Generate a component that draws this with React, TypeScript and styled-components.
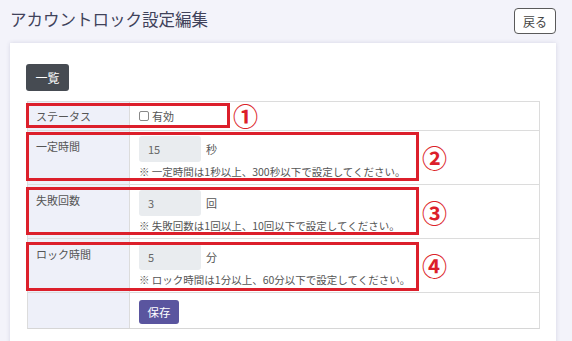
import React from "react";
import styled, { createGlobalStyle } from "styled-components";

const Global = createGlobalStyle`
  html, body { margin: 0; padding: 0; background: #f3f3fa; }
  body { font-family: "Noto Sans CJK JP", "Noto Sans", sans-serif; color: #555; }
  * { box-sizing: border-box; }
`;

const Page = styled.div`
  padding: 8px 16px 0 10px;
  width: 572px;
  height: 341px;
  overflow: hidden;
`;

const Header = styled.div`
  display: flex;
  justify-content: space-between;
  align-items: flex-start;
  height: 35px;
`;

const Title = styled.h1`
  margin: 0;
  margin-top: 0px;
  font-size: 16.5px;
  font-weight: 400;
  line-height: 22px;
  color: #40425a;
`;

const BackButton = styled.button`
  font-family: inherit;
  font-size: 12px;
  color: #444;
  background: #fff;
  border: 1px solid #5a5a5a;
  border-radius: 4px;
  height: 26px;
  width: 42px;
  padding: 0;
  cursor: pointer;
`;

const Card = styled.div`
  position: relative;
  background: #fff;
  box-shadow: 0 0 4px rgba(80, 80, 120, 0.18);
  padding: 21px 16px 20px 17px;
  height: 320px;
`;

const DarkButton = styled.button`
  font-family: inherit;
  font-size: 12px;
  color: #fff;
  background: #464b52;
  border: none;
  border-radius: 3px;
  height: 27px;
  width: 43px;
  padding: 0;
  margin-left: -1px;
`;

const Table = styled.div`
  margin-top: 10px;
  border: 1px solid #dcdcdc;
  border-bottom: 1px solid #d6d6d6;
  display: grid;
  grid-template-columns: 102px 1fr;
`;

const Label = styled.div<{ $center?: boolean }>`
  background: #eef0f9;
  border-right: 1px solid #dcdcdc;
  border-top: 1px solid #dcdcdc;
  font-size: 11px;
  color: #555;
  padding: ${(p) => (p.$center ? "0 8px" : "7px 8px 0")};
  display: flex;
  align-items: ${(p) => (p.$center ? "center" : "flex-start")};
  &:first-child { border-top: none; }
`;

const Value = styled.div<{ $h: number }>`
  border-top: 1px solid #dcdcdc;
  height: ${(p) => p.$h}px;
  padding: 5px 9px 0;
  &:nth-child(2) { border-top: none; padding-top: 0; display: flex; align-items: center; }
`;

const InputRow = styled.div`
  display: flex;
  align-items: center;
  gap: 5px;
`;

const NumInput = styled.div`
  width: 62px;
  height: 26px;
  background: #e9ecef;
  border-radius: 3px;
  font-size: 11px;
  color: #666;
  padding-left: 9px;
  display: flex;
  align-items: center;
`;

const Unit = styled.span`
  font-size: 11px;
  color: #555;
`;

const Hint = styled.div`
  margin-top: 2px;
  font-size: 10.5px;
  color: #555;
  line-height: 15px;
`;

const CheckLabel = styled.label`
  display: flex;
  align-items: center;
  gap: 3px;
  font-size: 11px;
  color: #555;
`;

const Box = styled.span`
  width: 10px;
  height: 10px;
  border: 1px solid #888;
  border-radius: 2px;
  background: #fff;
`;

const SaveButton = styled.button`
  font-family: inherit;
  font-size: 11.5px;
  color: #fff;
  background: #5a559f;
  border: none;
  border-radius: 3px;
  height: 24px;
  width: 40px;
  padding: 0;
  margin-top: 1px;
`;

const Mark = styled.div<{ $l: number; $t: number; $w: number; $h: number }>`
  position: absolute;
  left: ${(p) => p.$l}px;
  top: ${(p) => p.$t}px;
  width: ${(p) => p.$w}px;
  height: ${(p) => p.$h}px;
  border: 3px solid #dc1f2b;
  pointer-events: none;
`;

const Num = styled.span<{ $l: number; $t: number }>`
  position: absolute;
  left: ${(p) => p.$l}px;
  top: ${(p) => p.$t}px;
  font-size: 25px;
  line-height: 25px;
  font-weight: 700;
  color: #dc1f2b;
  font-family: "Noto Sans CJK JP", sans-serif;
`;

const fields = [
  { label: "一定時間", value: "15", unit: "秒", hint: "※ 一定時間は1秒以上、300秒以下で設定してください。" },
  { label: "失敗回数", value: "3", unit: "回", hint: "※ 失敗回数は1回以上、10回以下で設定してください。" },
  { label: "ロック時間", value: "5", unit: "分", hint: "※ ロック時間は1分以上、60分以下で設定してください。" },
];

export default function App() {
  return (
    <>
      <Global />
      <Page>
        <Header>
          <Title>アカウントロック設定編集</Title>
          <BackButton>戻る</BackButton>
        </Header>
        <Card>
          <DarkButton>一覧</DarkButton>
          <Table>
            <Label $center>ステータス</Label>
            <Value $h={28}>
              <CheckLabel>
                <Box />
                有効
              </CheckLabel>
            </Value>
            {fields.map((f) => (
              <React.Fragment key={f.label}>
                <Label>{f.label}</Label>
                <Value $h={54}>
                  <InputRow>
                    <NumInput>{f.value}</NumInput>
                    <Unit>{f.unit}</Unit>
                  </InputRow>
                  <Hint>{f.hint}</Hint>
                </Value>
              </React.Fragment>
            ))}
            <Label />
            <Value $h={36}>
              <SaveButton>保存</SaveButton>
            </Value>
          </Table>
          <Mark $l={16} $t={60} $w={204} $h={25} />
          <Num $l={223} $t={60}>①</Num>
          <Mark $l={16} $t={89} $w={393} $h={49} />
          <Num $l={412} $t={102}>②</Num>
          <Mark $l={16} $t={144} $w={393} $h={48} />
          <Num $l={412} $t={157}>③</Num>
          <Mark $l={16} $t={199} $w={393} $h={49} />
          <Num $l={412} $t={210}>④</Num>
        </Card>
      </Page>
    </>
  );
}
